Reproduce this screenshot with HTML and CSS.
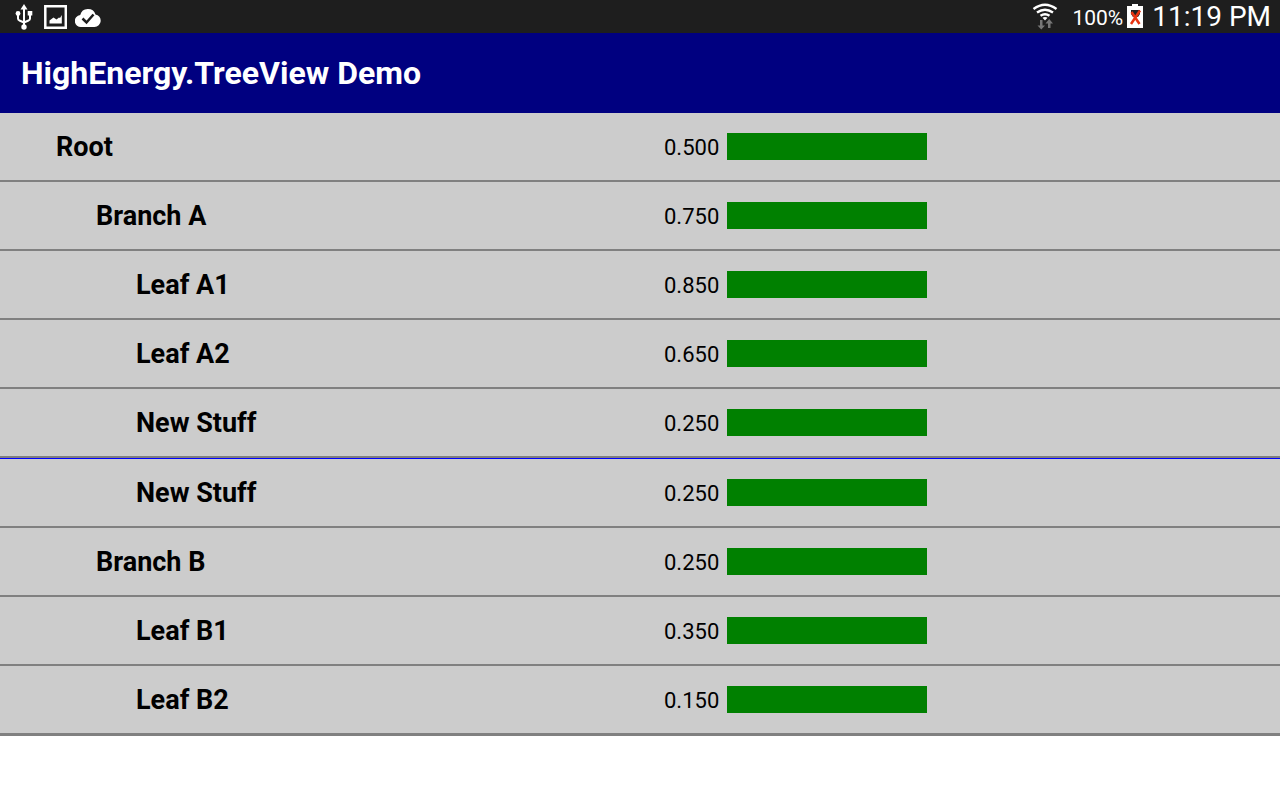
FILE: index.html
```html
<!DOCTYPE html>
<html lang="en">
<head>
<meta charset="utf-8">
<meta name="viewport" content="width=device-width, initial-scale=1">
<title>HighEnergy.TreeView Demo</title>
<link rel="stylesheet" href="styles.css">
</head>
<body>
<div class="status">
  <div class="status-left">
    <svg class="usb" width="18" height="26" viewBox="0 0 18 26" aria-hidden="true">
      <path d="M9 0l3.500 5.500h-7z" fill="#fff"/>
      <path d="M9 5v18M3 10v4.500q0 1.500 1.500 2L9 18.500M15 9v5.500q0 1.500-1.500 2L9 18.500" fill="none" stroke="#fff" stroke-width="2"/>
      <circle cx="3" cy="9.500" r="2.400" fill="#fff"/>
      <path d="M12.700 7h4.600v4.600h-4.600z" fill="#fff"/>
      <circle cx="9" cy="23" r="2.700" fill="#fff"/>
    </svg>
    <svg width="23" height="26" viewBox="0 0 23 26" aria-hidden="true">
      <path d="M1.300 2.300h20.500v21.500H1.300z" fill="none" stroke="#fff" stroke-width="2.500"/>
      <path d="M5.500 19.500v-3l4-3 3 2 2.500-2 1 .5 1.800-3v8.500z" fill="#fff"/>
    </svg>
    <svg width="26" height="26" viewBox="0 0 26 26" aria-hidden="true">
      <path d="M6.500 23a6 6 0 0 1-1.300-12A8 8 0 0 1 20.500 10.500a6.300 6.300 0 0 1-1 12.500z" fill="#fff"/>
      <path d="M7.500 14.500l4 4 7-8" fill="none" stroke="#1e1e1e" stroke-width="2.500"/>
    </svg>
  </div>
  <div class="status-right">
    <svg class="wifi" width="26" height="28" viewBox="0 0 26 28" aria-hidden="true">
      <path d="M1.500 6q11.500-8.500 23 0M5 9.500q8-5.500 16 0M8.500 12.800q4.500-3 9 0" fill="none" stroke="#fff" stroke-width="2.400"/>
      <path d="M10.500 14.800q2.500-1.500 5 0L13 17.500z" fill="#fff"/>
      <path d="M8 17h2.500v5.500h2.500l-3.700 4-3.800-4h2.500zM16 25v-4.500h-2.500l3.700-4.500 3.800 4.500h-2.500V25z" fill="#777"/>
    </svg>
    <span class="percent">100%</span>
    <svg class="battery" width="16" height="26" viewBox="0 0 16 26" aria-hidden="true">
      <path d="M5 0h6v2h5v22H0V2h5z" fill="#fff"/>
      <path d="M4 6h9v4l-2 3H6l-2-3z" fill="#222"/>
      <path d="M4.500 8l8 12M13 6.500L4 20" stroke="#e83412" stroke-width="2.500" fill="none"/>
    </svg>
    <time class="clock">11:19 PM</time>
  </div>
</div>
<header class="title-bar"><h1 class="title">HighEnergy.TreeView Demo</h1></header>
<main>
  <ul class="tree">
    <li class="row"><span class="name level-1">Root</span><span class="reading"><span class="value">0.500</span><span class="bar"></span></span></li>
    <li class="row"><span class="name level-2">Branch A</span><span class="reading"><span class="value">0.750</span><span class="bar"></span></span></li>
    <li class="row"><span class="name level-3">Leaf A1</span><span class="reading"><span class="value">0.850</span><span class="bar"></span></span></li>
    <li class="row"><span class="name level-3">Leaf A2</span><span class="reading"><span class="value">0.650</span><span class="bar"></span></span></li>
    <li class="row"><span class="name level-3">New Stuff</span><span class="reading"><span class="value">0.250</span><span class="bar"></span></span></li>
    <li class="row drop-target"><span class="name level-3">New Stuff</span><span class="reading"><span class="value">0.250</span><span class="bar"></span></span></li>
    <li class="row"><span class="name level-2">Branch B</span><span class="reading"><span class="value">0.250</span><span class="bar"></span></span></li>
    <li class="row"><span class="name level-3">Leaf B1</span><span class="reading"><span class="value">0.350</span><span class="bar"></span></span></li>
    <li class="row"><span class="name level-3">Leaf B2</span><span class="reading"><span class="value">0.150</span><span class="bar"></span></span></li>
  </ul>
</main>
</body>
</html>
```
FILE: styles.css
```css
* { box-sizing: border-box; }
body {
  margin: 0;
  background: #fff;
  color: #000;
  font-family: Roboto, "Liberation Sans", sans-serif;
}
.status {
  display: flex;
  justify-content: space-between;
  align-items: center;
  padding: 0 9px 0 15px;
  background: #1e1e1e;
  color: #fff;
  line-height: 33px;
}
.status svg { display: block; flex: none; }
.status-left { display: flex; align-items: center; gap: 8px; }
.usb { margin-right: 3px; }
.status-right { display: flex; align-items: center; }
.wifi { margin-right: 14px; }
.percent { font-size: 21px; padding-top: 3px; line-height: 30px; }
.battery { margin: 0 9px 0 4px; }
.clock { font-size: 28px; }
.title-bar { padding: 20px 21px; background: #000080; color: #fff; }
.title { margin: 0; font-size: 32px; line-height: 40px; font-weight: 700; }
.tree { margin: 0; padding: 0; list-style: none; background: #ccc; }
.row {
  display: grid;
  grid-template-columns: 1fr 1fr;
  align-items: center;
  padding: 20px 0;
  border-bottom: 2px solid #808080;
}
.row:last-child { border-bottom-width: 3px; }
.drop-target { border-top: 1px solid #00f; }
.name { padding-top: 2px; font-size: 27px; line-height: 25px; font-weight: 700; }
.level-1 { padding-left: 56px; }
.level-2 { padding-left: 96px; }
.level-3 { padding-left: 136px; }
.reading { display: flex; gap: 8px; padding-left: 24px; }
.value { flex: 0 0 55px; padding-top: 2px; font-size: 22px; line-height: 25px; }
.bar { width: 200px; height: 27px; background: #008000; }
```
